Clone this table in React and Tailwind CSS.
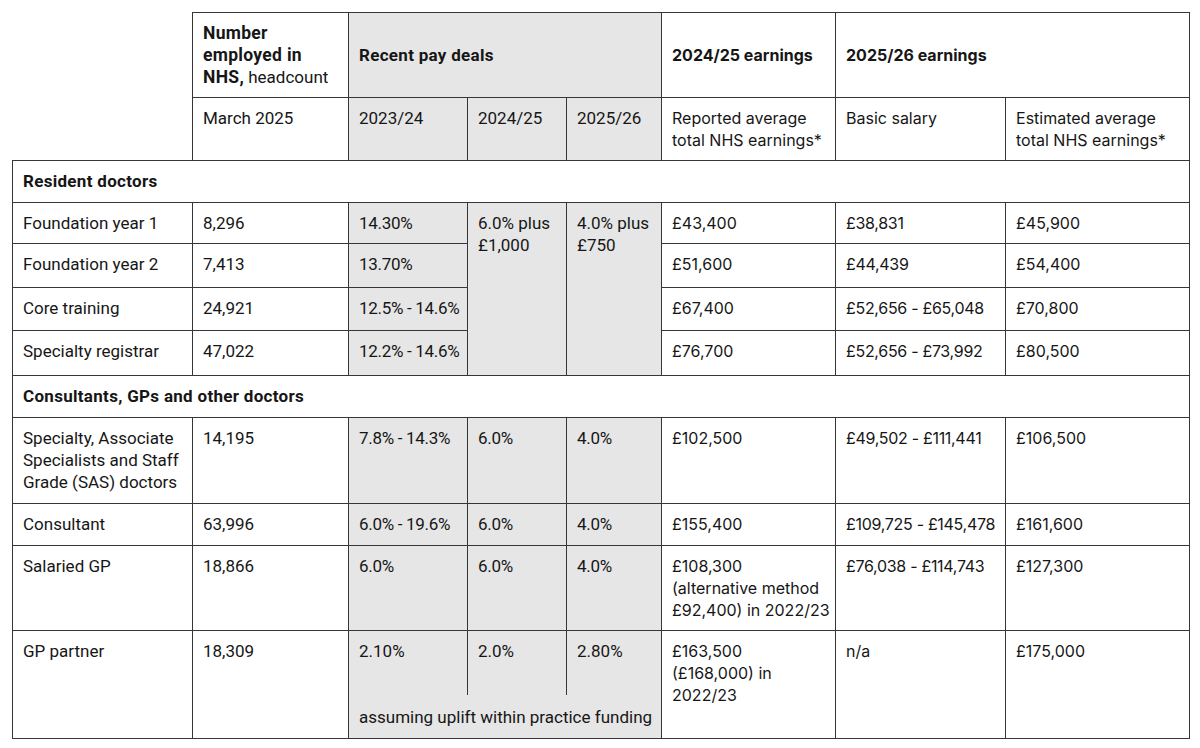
import React from "react";

const L = "font-['Roboto','Liberation_Sans',sans-serif] text-[17px]";
const R = "font-['Inter','Liberation_Sans',sans-serif] text-[16px]";
const LB = "font-bold text-[17.5px] tracking-[0.3px]";
const tight = "whitespace-nowrap tracking-[-0.3px]";

const cell = "border border-[#363636] pl-[10px] pr-[4px] py-[9px] leading-[22px]";
const td = `${cell} align-top`;
const grey = "bg-[#e6e6e6]";

const resident = [
  ["Foundation year 1", "8,296", "14.30%", "£43,400", "£38,831", "£45,900", "h-[41px]"],
  ["Foundation year 2", "7,413", "13.70%", "£51,600", "£44,439", "£54,400", "h-[44px]"],
  ["Core training", "24,921", "12.5% - 14.6%", "£67,400", "£52,656 - £65,048", "£70,800", "h-[43px]"],
  ["Specialty registrar", "47,022", "12.2% - 14.6%", "£76,700", "£52,656 - £73,992", "£80,500", "h-[45px]"],
];

const others = [
  {
    role: "Specialty, Associate Specialists and Staff Grade (SAS) doctors",
    count: "14,195",
    deals: ["7.8% - 14.3%", "6.0%", "4.0%"],
    reported: "£102,500",
    basic: "£49,502 - £111,441",
    est: "£106,500",
    h: "h-[86px]",
  },
  {
    role: "Consultant",
    count: "63,996",
    deals: ["6.0% - 19.6%", "6.0%", "4.0%"],
    reported: "£155,400",
    basic: "£109,725 - £145,478",
    est: "£161,600",
    h: "h-[42px]",
  },
  {
    role: "Salaried GP",
    count: "18,866",
    deals: ["6.0%", "6.0%", "4.0%"],
    reported: (
      <>
        £108,300
        <br />
        (alternative method
        <br />
        £92,400) in 2022/23
      </>
    ),
    basic: "£76,038 - £114,743",
    est: "£127,300",
    h: "h-[85px]",
  },
];

function SectionRow({ title }) {
  return (
    <tr className="h-[42px]">
      <td colSpan={8} className={`${td} ${L} ${LB}`}>
        {title}
      </td>
    </tr>
  );
}

export default function App() {
  return (
    <div className="bg-white w-[1200px] h-[748px] overflow-hidden pt-[12px] pl-[12px] text-[#161616]">
      <table className="border-collapse table-fixed w-[1177px]">
        <colgroup>
          <col className="w-[180px]" />
          <col className="w-[156px]" />
          <col className="w-[119px]" />
          <col className="w-[99px]" />
          <col className="w-[95px]" />
          <col className="w-[174px]" />
          <col className="w-[170px]" />
          <col className="w-[184px]" />
        </colgroup>
        <tbody>
          <tr className="h-[85px]">
            <td className="border-0" />
            <td className={`${td} ${L}`}>
              <span className={LB}>
                Number
                <br />
                employed in
                <br />
                NHS,
              </span>{" "}
              headcount
            </td>
            <td colSpan={3} className={`${cell} ${L} ${LB} ${grey} align-middle`}>
              Recent pay deals
            </td>
            <td className={`${cell} ${R} align-middle font-bold`}>2024/25 earnings</td>
            <td colSpan={2} className={`${cell} ${R} align-middle font-bold`}>
              2025/26 earnings
            </td>
          </tr>
          <tr className="h-[63px]">
            <td className="border-0" />
            <td className={`${td} ${L}`}>March 2025</td>
            <td className={`${td} ${L} ${grey}`}>2023/24</td>
            <td className={`${td} ${L} ${grey}`}>2024/25</td>
            <td className={`${td} ${L} ${grey}`}>2025/26</td>
            <td className={`${td} ${R}`}>
              Reported average
              <br />
              total NHS earnings*
            </td>
            <td className={`${td} ${R}`}>Basic salary</td>
            <td className={`${td} ${R}`}>
              Estimated average
              <br />
              total NHS earnings*
            </td>
          </tr>

          <SectionRow title="Resident doctors" />
          {resident.map((r, i) => (
            <tr key={r[0]} className={r[6]}>
              <td className={`${td} ${L}`}>{r[0]}</td>
              <td className={`${td} ${L}`}>{r[1]}</td>
              <td className={`${td} ${L} ${grey} ${tight}`}>{r[2]}</td>
              {i === 0 && (
                <>
                  <td rowSpan={4} className={`${td} ${L} ${grey}`}>
                    6.0% plus £1,000
                  </td>
                  <td rowSpan={4} className={`${td} ${L} ${grey}`}>
                    4.0% plus £750
                  </td>
                </>
              )}
              <td className={`${td} ${R}`}>{r[3]}</td>
              <td className={`${td} ${R} ${tight}`}>{r[4]}</td>
              <td className={`${td} ${R}`}>{r[5]}</td>
            </tr>
          ))}

          <SectionRow title="Consultants, GPs and other doctors" />
          {others.map((r) => (
            <tr key={r.role} className={r.h}>
              <td className={`${td} ${L}`}>{r.role}</td>
              <td className={`${td} ${L}`}>{r.count}</td>
              {r.deals.map((d, j) => (
                <td key={j} className={`${td} ${L} ${grey} ${tight}`}>
                  {d}
                </td>
              ))}
              <td className={`${td} ${R}`}>{r.reported}</td>
              <td className={`${td} ${R} ${tight}`}>{r.basic}</td>
              <td className={`${td} ${R}`}>{r.est}</td>
            </tr>
          ))}

          <tr className="h-[64px]">
            <td rowSpan={2} className={`${td} ${L}`}>GP partner</td>
            <td rowSpan={2} className={`${td} ${L}`}>18,309</td>
            <td className={`${td} ${L} ${grey} border-b-0`}>2.10%</td>
            <td className={`${td} ${L} ${grey} border-b-0`}>2.0%</td>
            <td className={`${td} ${L} ${grey} border-b-0`}>2.80%</td>
            <td rowSpan={2} className={`${td} ${R}`}>
              £163,500
              <br />
              (£168,000) in
              <br />
              2022/23
            </td>
            <td rowSpan={2} className={`${td} ${R}`}>n/a</td>
            <td rowSpan={2} className={`${td} ${R}`}>£175,000</td>
          </tr>
          <tr className="h-[44px]">
            <td colSpan={3} className={`${td} ${L} ${grey} border-t-0 pt-[11px] whitespace-nowrap`}>
              assuming uplift within practice funding
            </td>
          </tr>
        </tbody>
      </table>
    </div>
  );
}
